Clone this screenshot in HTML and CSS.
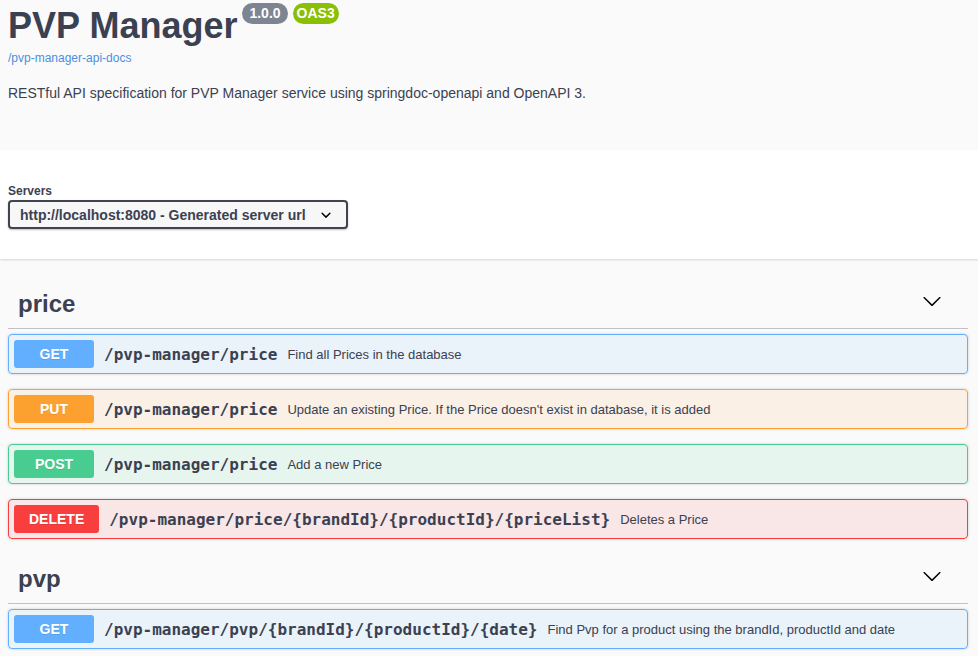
FILE: index.html
```html
<!DOCTYPE html>
<html lang="en">
<head>
<meta charset="utf-8">
<title>PVP Manager</title>
<link rel="stylesheet" href="styles.css">
</head>
<body>
<div class="info">
  <h2 class="title">PVP Manager<span class="badge badge-version">1.0.0</span><span class="badge badge-oas">OAS3</span></h2>
  <a class="link" href="#">/pvp-manager-api-docs</a>
  <p class="desc">RESTful API specification for PVP Manager service using springdoc-openapi and OpenAPI 3.</p>
</div>

<div class="scheme">
  <span class="servers-label">Servers</span>
  <div class="select">
    <span>http://localhost:8080 - Generated server url</span>
    <svg class="select-arrow" width="20" height="20" viewBox="0 0 20 20"><path d="M13.418 7.859a.695.695 0 0 1 .978 0 .68.68 0 0 1 0 .969l-3.908 3.83a.697.697 0 0 1-.979 0l-3.908-3.83a.68.68 0 0 1 0-.969.695.695 0 0 1 .978 0L10 11l3.418-3.141z"/></svg>
  </div>
</div>

<div class="ops">
  <section class="tag-section">
    <div class="tag">
      <h3 class="tag-name">price</h3>
      <svg class="tag-arrow" width="20" height="20" viewBox="0 0 20 20"><path d="M17.418 6.109c.272-.268.709-.268.979 0s.271.701 0 .969l-7.908 7.83c-.27.268-.707.268-.979 0l-7.908-7.830c-.27-.268-.27-.701 0-.969.271-.268.709-.268.979 0L10 13.25l7.418-7.141z"/></svg>
    </div>
    <div class="opblock get">
      <span class="method">GET</span>
      <span class="path">/pvp-manager/price</span>
      <span class="summary">Find all Prices in the database</span>
    </div>
    <div class="opblock put">
      <span class="method">PUT</span>
      <span class="path">/pvp-manager/price</span>
      <span class="summary">Update an existing Price. If the Price doesn't exist in database, it is added</span>
    </div>
    <div class="opblock post">
      <span class="method">POST</span>
      <span class="path">/pvp-manager/price</span>
      <span class="summary">Add a new Price</span>
    </div>
    <div class="opblock delete">
      <span class="method">DELETE</span>
      <span class="path">/pvp-manager/price/{brandId}/{productId}/{priceList}</span>
      <span class="summary">Deletes a Price</span>
    </div>
  </section>
  <section class="tag-section">
    <div class="tag">
      <h3 class="tag-name">pvp</h3>
      <svg class="tag-arrow" width="20" height="20" viewBox="0 0 20 20"><path d="M17.418 6.109c.272-.268.709-.268.979 0s.271.701 0 .969l-7.908 7.83c-.27.268-.707.268-.979 0l-7.908-7.83c-.27-.268-.27-.701 0-.969.271-.268.709-.268.979 0L10 13.25l7.418-7.141z"/></svg>
    </div>
    <div class="opblock get">
      <span class="method">GET</span>
      <span class="path">/pvp-manager/pvp/{brandId}/{productId}/{date}</span>
      <span class="summary">Find Pvp for a product using the brandId, productId and date</span>
    </div>
  </section>
</div>
</body>
</html>
```

FILE: styles.css
```css
* { box-sizing: border-box; }

body {
  margin: 0;
  background: #fafafa;
  font-family: "Liberation Sans", Arial, sans-serif;
  color: #3b4151;
}

.info {
  height: 150px;
  padding: 5px 10px 0 8px;
}

.title {
  margin: 0;
  font-size: 36px;
  font-weight: 700;
  line-height: 41px;
  color: #3b4151;
}

.badge {
  display: inline-block;
  position: relative;
  top: -15px;
  vertical-align: middle;
  font-size: 14px;
  line-height: 17px;
  font-weight: 700;
  color: #fff;
  border-radius: 57px;
  padding: 2px 7px;
  margin-left: 5px;
}

.badge-version { background: #7d8492; }
.badge-oas { background: #89bf04; padding: 2px 4px; }

.link {
  display: block;
  margin-top: 5px;
  font-size: 12px;
  line-height: 14px;
  color: #4990e2;
  text-decoration: none;
}

.desc {
  margin: 20px 0 0;
  font-size: 14px;
  line-height: 17px;
}

.scheme {
  background: #fff;
  box-shadow: 0 1px 2px 0 rgba(0, 0, 0, 0.15);
  padding: 34px 10px 30px 8px;
  margin-bottom: 20px;
}

.servers-label {
  display: block;
  font-size: 12px;
  line-height: 14px;
  font-weight: 700;
  margin-bottom: 2px;
}

.select {
  display: inline-flex;
  align-items: center;
  gap: 10px;
  height: 29px;
  padding: 0 10px;
  border: 2px solid #41444e;
  border-radius: 4px;
  background: #f7f7f7;
  box-shadow: 0 1px 2px 0 rgba(0, 0, 0, 0.25);
  font-size: 14px;
  font-weight: 700;
  color: #3b4151;
}

.select-arrow { display: block; fill: #000; }

.ops {
  padding: 0 10px 0 8px;
}

.tag-section + .tag-section { margin-top: 3px; }

.tag {
  display: flex;
  align-items: flex-start;
  justify-content: space-between;
  padding: 11px 26px 10px 10px;
  margin-bottom: 5px;
  border-bottom: 1px solid rgba(59, 65, 81, 0.3);
}

.tag-name {
  margin: 0;
  font-size: 24px;
  line-height: 28px;
  font-weight: 700;
}

.tag-arrow {
  display: block;
  margin-top: 1px;
  fill: #000;
}

.opblock {
  display: flex;
  align-items: center;
  padding: 5px;
  margin-bottom: 15px;
  border: 1px solid;
  border-radius: 4px;
  box-shadow: 0 0 3px rgba(0, 0, 0, 0.19);
}

.method {
  min-width: 80px;
  padding: 6px 15px;
  border-radius: 3px;
  font-size: 14px;
  line-height: 16px;
  font-weight: 700;
  text-align: center;
  color: #fff;
  text-shadow: 0 1px 0 rgba(0, 0, 0, 0.1);
}

.path {
  padding: 0 10px;
  font-family: "DejaVu Sans Mono", monospace;
  font-size: 16px;
  font-weight: 700;
  color: #3b4151;
}

.summary {
  font-size: 13px;
  color: #3b4151;
}

.get { background: rgba(97, 175, 254, 0.1); border-color: #61affe; }
.get .method { background: #61affe; }
.put { background: rgba(252, 161, 48, 0.1); border-color: #fca130; }
.put .method { background: #fca130; }
.post { background: rgba(73, 204, 144, 0.1); border-color: #49cc90; }
.post .method { background: #49cc90; }
.delete { background: rgba(249, 62, 62, 0.1); border-color: #f93e3e; }
.delete .method { background: #f93e3e; }
```
